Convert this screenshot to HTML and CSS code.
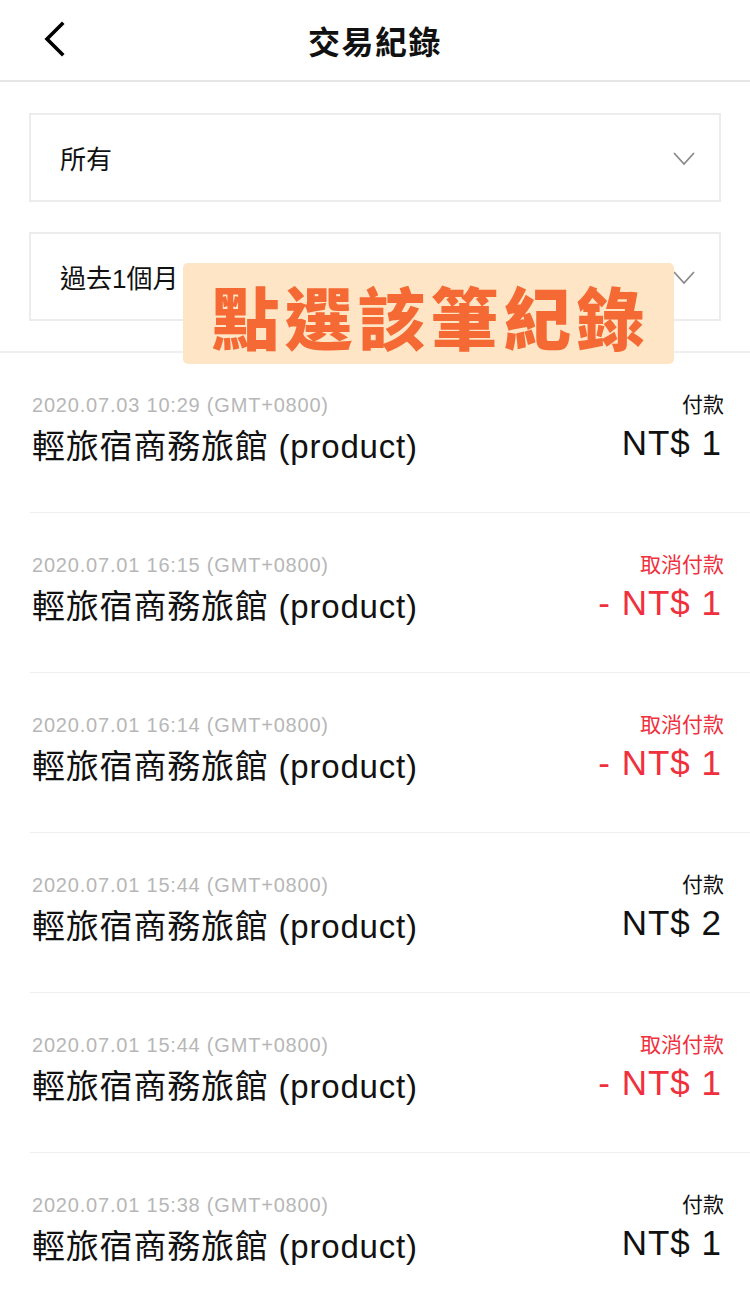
FILE: index.html
```html
<!DOCTYPE html>
<html>

<head>
    <title>交易紀錄</title>
    <meta charset=utf-8>
    <meta name=viewport content="width=device-width, initial-scale=1">
    <link rel="stylesheet" href="styles.css">
</head>

<body>
    <div id="header">
        <a class="back">
            <svg width="24" height="36" viewBox="0 0 24 36">
                <path d="M19 3 L4 18 L19 33" fill="none" stroke="#000" stroke-width="3.6" stroke-linecap="square"/>
            </svg>
        </a>
        <h1>交易紀錄</h1>
    </div>

    <div id="filters">
        <div class="select">
            <span>所有</span>
            <svg class="arrow" width="22" height="14" viewBox="0 0 22 14"><path d="M1 1 L11 12 L21 1" fill="none" stroke="#8a8a8a" stroke-width="1.8"/></svg>
        </div>
        <div class="select">
            <span>過去1個月</span>
            <svg class="arrow" width="22" height="14" viewBox="0 0 22 14"><path d="M1 1 L11 12 L21 1" fill="none" stroke="#8a8a8a" stroke-width="1.8"/></svg>
        </div>
        <div class="tip">點選該筆紀錄</div>
    </div>

    <div id="list">
        <div class="row">
            <div class="left">
                <div class="time">2020.07.03 10:29 (GMT+0800)</div>
                <div class="name">輕旅宿商務旅館 (product)</div>
            </div>
            <div class="right">
                <div class="status">付款</div>
                <div class="amount">NT$ 1</div>
            </div>
        </div>
        <div class="row cancel">
            <div class="left">
                <div class="time">2020.07.01 16:15 (GMT+0800)</div>
                <div class="name">輕旅宿商務旅館 (product)</div>
            </div>
            <div class="right">
                <div class="status">取消付款</div>
                <div class="amount">- NT$ 1</div>
            </div>
        </div>
        <div class="row cancel">
            <div class="left">
                <div class="time">2020.07.01 16:14 (GMT+0800)</div>
                <div class="name">輕旅宿商務旅館 (product)</div>
            </div>
            <div class="right">
                <div class="status">取消付款</div>
                <div class="amount">- NT$ 1</div>
            </div>
        </div>
        <div class="row">
            <div class="left">
                <div class="time">2020.07.01 15:44 (GMT+0800)</div>
                <div class="name">輕旅宿商務旅館 (product)</div>
            </div>
            <div class="right">
                <div class="status">付款</div>
                <div class="amount">NT$ 2</div>
            </div>
        </div>
        <div class="row cancel">
            <div class="left">
                <div class="time">2020.07.01 15:44 (GMT+0800)</div>
                <div class="name">輕旅宿商務旅館 (product)</div>
            </div>
            <div class="right">
                <div class="status">取消付款</div>
                <div class="amount">- NT$ 1</div>
            </div>
        </div>
        <div class="row">
            <div class="left">
                <div class="time">2020.07.01 15:38 (GMT+0800)</div>
                <div class="name">輕旅宿商務旅館 (product)</div>
            </div>
            <div class="right">
                <div class="status">付款</div>
                <div class="amount">NT$ 1</div>
            </div>
        </div>
    </div>
</body>

</html>
```

FILE: styles.css
```css
body {
    margin: 0;
    font-family: "Liberation Sans", "Noto Sans CJK TC", sans-serif;
    background: #fff;
    color: #111;
    overflow: hidden;
}

#header {
    height: 80px;
    border-bottom: 2px solid #e6e6e6;
    display: flex;
    align-items: center;
    justify-content: center;
    position: relative;
}

.back {
    position: absolute;
    left: 43px;
    top: 21px;
}

h1 {
    margin: 0;
    font-size: 32px;
    font-weight: bold;
    letter-spacing: 1.5px;
}

#filters {
    padding: 31px 29px 30px;
    display: flex;
    flex-direction: column;
    gap: 30px;
    position: relative;
}

.select {
    height: 85px;
    border: 2px solid #ececec;
    display: flex;
    align-items: center;
    justify-content: space-between;
    padding: 0 24px 0 29px;
    font-size: 26px;
}

.arrow {
    margin-top: 2px;
}

.tip {
    position: absolute;
    left: 183px;
    top: 181px;
    width: 491px;
    height: 101px;
    box-sizing: border-box;
    background: #fde5c5;
    border-radius: 5px;
    color: #f56a34;
    font-size: 68px;
    font-weight: 900;
    letter-spacing: 5px;
    display: flex;
    align-items: center;
    justify-content: center;
    padding: 4px 0 0 4px;
}

#list {
    border-top: 2px solid #efefef;
}

.row {
    margin-left: 30px;
    padding: 39px 28px 44px 0;
    border-bottom: 1px solid #f0f0f0;
    display: flex;
    justify-content: space-between;
}

.time {
    font-size: 20px;
    line-height: 26px;
    letter-spacing: 0.8px;
    color: #b7b7b7;
    margin-left: 2px;
}

.name {
    font-size: 33px;
    line-height: 42px;
    margin-top: 8px;
    letter-spacing: 0.8px;
    margin-left: 2px;
}

.right {
    text-align: right;
}

.status {
    font-size: 21px;
    line-height: 26px;
    margin-right: -2px;
}

.amount {
    font-size: 35px;
    line-height: 42px;
    margin-top: 4px;
    letter-spacing: 1px;
}

.cancel .right {
    color: #f0303d;
}
```
